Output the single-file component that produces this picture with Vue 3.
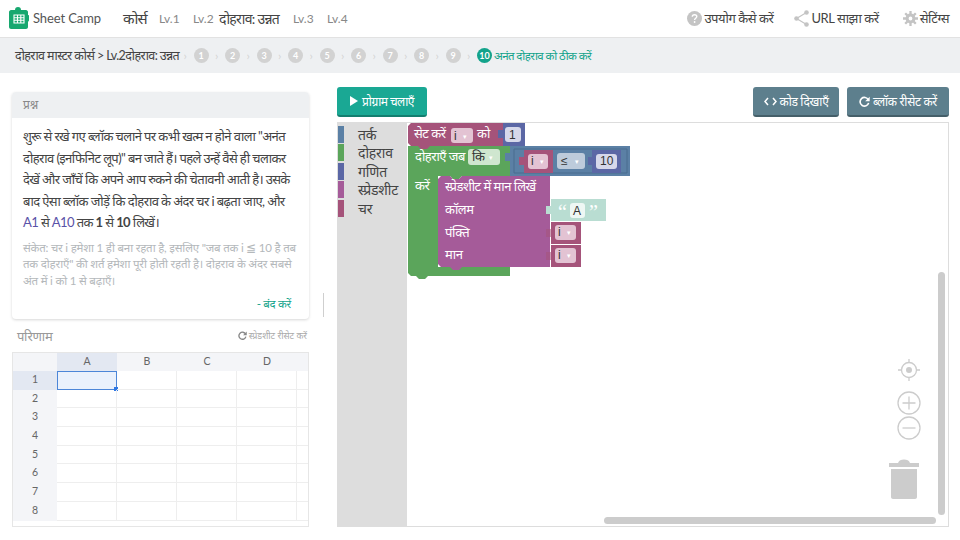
<template>
  <div class="page">
    <header class="topbar">
      <div class="brand">
        <svg class="logo" width="20" height="22" viewBox="0 0 20 22">
          <path d="M2 3h4c0-2 1-3 3-3s3 1 3 3h5c1 0 2 1 2 2v3c1 0 1 .5 1 1.500V13c0 1-.5 1.500-1 1.500V20c0 1-1 2-2 2H2c-1 0-2-1-2-2V5c0-1 1-2 2-2z" fill="#17a86f" />
          <path d="M5 8h10v8H5zM5 10.700h10M5 13.300h10M8.500 8v8M11.800 8v8" fill="none" stroke="#fff" stroke-width="1.100" />
        </svg>
        <span>Sheet Camp</span>
      </div>
      <nav class="levels">
        <span class="course">कोर्स</span>
        <span class="lv first">Lv.1</span>
        <span class="lv second">Lv.2</span>
        <span class="course-sub">दोहराव: उन्नत</span>
        <span class="lv third">Lv.3</span>
        <span class="lv fourth">Lv.4</span>
      </nav>
      <div class="tools">
        <span class="tool help">
          <svg width="15" height="15" viewBox="0 0 15 15">
            <circle cx="7.500" cy="7.500" r="7.500" fill="#c4c4c4" />
            <path d="M5.300 5.800c0-1.300 1-2.100 2.300-2.100s2.200.8 2.200 1.900c0 1.600-2.200 1.700-2.200 3.300" fill="none" stroke="#fff" stroke-width="1.400" />
            <circle cx="7.600" cy="11" r=".9" fill="#fff" />
          </svg>
          उपयोग कैसे करें
        </span>
        <span class="tool share">
          <svg width="15" height="17" viewBox="0 0 15 17">
            <path d="M12.500 2.500 2.500 8.500l10 6" fill="none" stroke="#c4c4c4" stroke-width="1.200" />
            <circle cx="12.500" cy="2.500" r="2.300" fill="#c4c4c4" />
            <circle cx="2.500" cy="8.500" r="2.300" fill="#c4c4c4" />
            <circle cx="12.500" cy="14.500" r="2.300" fill="#c4c4c4" />
          </svg>
          URL साझा करें
        </span>
        <span class="tool gear">
          <svg width="15" height="15" viewBox="0 0 15 15">
            <circle cx="7.500" cy="7.500" r="3.400" fill="none" stroke="#c4c4c4" stroke-width="3" />
            <path d="M7.500 0v15M0 7.500h15M2.200 2.200l10.600 10.600M12.800 2.200 2.200 12.800" stroke="#c4c4c4" stroke-width="2.300" stroke-dasharray="3 9" />
          </svg>
          सेटिंग्स
        </span>
      </div>
    </header>

    <div class="crumbs">
      <span class="crumb-text">दोहराव मास्टर कोर्स &gt; Lv.2दोहराव: उन्नत</span>
      <div class="steps">
        <template v-for="n in 9" :key="n">
          <i class="sep">›</i>
          <span class="step">{{ n }}</span>
        </template>
        <i class="sep">›</i>
        <span class="step active">10</span>
        <span class="step-title">अनंत दोहराव को ठीक करें</span>
      </div>
    </div>

    <main class="body">
      <section class="left">
        <div class="card">
          <div class="card-head">प्रश्न</div>
          <div class="card-body">
            <p class="question">
              शुरू से रखे गए ब्लॉक चलाने पर कभी खत्म न होने वाला "अनंत<br />
              दोहराव (इनफिनिट लूप)" बन जाते हैं। पहले उन्हें वैसे ही चलाकर<br />
              देखें और जाँचें कि अपने आप रुकने की चेतावनी आती है। उसके<br />
              बाद ऐसा ब्लॉक जोड़ें कि दोहराव के अंदर चर i बढ़ता जाए, और<br />
              <b>A1</b> से <b>A10</b> तक <em>1</em> से <em>10</em> लिखें।
            </p>
            <p class="hint">
              संकेत: चर i हमेशा 1 ही बना रहता है, इसलिए "जब तक i ≦ 10 है तब<br />
              तक दोहराएँ" की शर्त हमेशा पूरी होती रहती है। दोहराव के अंदर सबसे<br />
              अंत में i को 1 से बढ़ाएँ।
            </p>
            <div class="close">- बंद करें</div>
          </div>
        </div>

        <div class="result-head">
          <span class="result-title">परिणाम</span>
          <span class="sheet-reset">
            <svg width="9" height="9" viewBox="0 0 16 16">
              <path d="M13.500 5.500A6.300 6.300 0 1 0 14 10" fill="none" stroke="#888" stroke-width="2.400" />
              <path d="M15.500 1v6.500H9z" fill="#888" />
            </svg>
            स्प्रेडशीट रीसेट करें
          </span>
        </div>

        <div class="sheet">
          <div class="sheet-row head-row">
            <div class="corner"></div>
            <div v-for="c in cols" :key="c" class="col-head" :class="{ on: c === 'A' }">{{ c }}</div>
            <div class="rest"></div>
          </div>
          <div v-for="r in 8" :key="r" class="sheet-row">
            <div class="row-head" :class="{ on: r === 1 }">{{ r }}</div>
            <div v-for="c in cols" :key="c" class="cell" :class="{ selected: r === 1 && c === 'A' }"></div>
            <div class="rest cell"></div>
          </div>
        </div>
      </section>

      <div class="splitter"></div>

      <section class="right">
        <div class="actions">
          <button class="btn run">
            <svg width="8" height="10" viewBox="0 0 8 10"><path d="M0 0l8 5-8 5z" fill="#fff" /></svg>
            प्रोग्राम चलाएँ
          </button>
          <div class="actions-right">
            <button class="btn slate code">
              <svg width="13" height="9" viewBox="0 0 13 9"><path d="M4 1 1 4.500 4 8M9 1l3 3.500L9 8" fill="none" stroke="#fff" stroke-width="1.500" /></svg>
              कोड दिखाएँ
            </button>
            <button class="btn slate reset">
              <svg width="11" height="11" viewBox="0 0 16 16">
                <path d="M13.500 5.500A6.300 6.300 0 1 0 14 10" fill="none" stroke="#fff" stroke-width="2.400" />
                <path d="M15.500 1v6.500H9z" fill="#fff" />
              </svg>
              ब्लॉक रीसेट करें
            </button>
          </div>
        </div>

        <div class="workspace">
          <aside class="toolbox">
            <div v-for="t in toolbox" :key="t.name" class="tool-row">
              <span class="swatch" :style="{ background: t.color }"></span>
              <span>{{ t.name }}</span>
            </div>
          </aside>
          <div class="canvas">
            <svg class="blocks" width="541" height="403" viewBox="408 123 541 403">
              <!-- repeat loop, drawn first so the others sit on top -->
              <path d="M408 146h102v30h-48l-3 3h-6l-3-3h-12v91h72v9h-82l-3 3h-6l-3-3h-5l-3-3v-124z" fill="#5ba55b" />
              <path d="M510 146h120v30H510z" fill="#5b80a5" />
              <path d="M514 149h113v24H514z" fill="none" stroke="#4a6d8f" stroke-width="1" />
              <path d="M505 153h6v8h-6z" fill="#5b80a5" />

              <!-- set block -->
              <path d="M411 123h92v23h-73l-3 3h-6l-3-3h-7l-3-3v-17z" fill="#a5537a" />
              <path d="M503 123h22v23h-22z" fill="#5b67a5" />
              <path d="M498 130h5v8h-5z" fill="#5b67a5" />
              <rect x="505" y="127" width="16" height="15" rx="3" fill="#d6d8ea" />
              <rect x="451" y="128" width="22" height="15" rx="3" fill="#e3c3d3" />
              <text class="bt" x="414" y="138">सेट करें</text>
              <text class="ft" x="454" y="140">i</text>
              <text class="arrow" x="463" y="139">▾</text>
              <text class="bt" x="477" y="138">को</text>
              <text class="ft" x="509" y="139">1</text>

              <text class="bt" x="415" y="161">दोहराएँ जब</text>
              <rect x="468" y="149" width="32" height="16" rx="3" fill="#cfe6cf" />
              <text class="ft dev" x="472" y="161">कि</text>
              <text class="arrow" x="489" y="160">▾</text>
              <text class="bt" x="415" y="190">करें</text>

              <!-- compare parts -->
              <path d="M524 150h29v23h-29z" fill="#a5537a" />
              <path d="M519 157h5v8h-5z" fill="#a5537a" />
              <rect x="528" y="154" width="20" height="15" rx="3" fill="#e3c3d3" />
              <text class="ft" x="531" y="165">i</text>
              <text class="arrow" x="540" y="164">▾</text>
              <rect x="557" y="153" width="28" height="16" rx="3" fill="#bdcbdb" />
              <text class="ft" x="561" y="165">≤</text>
              <text class="arrow" x="575" y="164">▾</text>
              <path d="M592 150h29v23h-29z" fill="#5b67a5" />
              <path d="M588 157h4v8h-4z" fill="#5b67a5" />
              <rect x="596" y="154" width="21" height="15" rx="3" fill="#d6d8ea" />
              <text class="ft" x="600" y="165">10</text>

              <!-- spreadsheet write block -->
              <path d="M441 176h9l3 3h6l3-3h88v91h-88l-3 3h-6l-3-3h-9l-3-3v-85z" fill="#a55b99" />
              <text class="bt" x="445" y="191">स्प्रेडशीट में मान लिखें</text>
              <text class="bt" x="445" y="214">कॉलम</text>
              <text class="bt" x="445" y="237">पंक्ति</text>
              <text class="bt" x="445" y="259">मान</text>

              <path d="M551 199h55v22h-55z" fill="#b9ddd2" />
              <path d="M546 206h5v8h-5z" fill="#b9ddd2" />
              <text class="quote" x="558" y="219">“</text>
              <rect x="570" y="203" width="15" height="15" rx="3" fill="#eef7f4" />
              <text class="ft" x="573" y="215">A</text>
              <text class="quote" x="589" y="219">”</text>

              <path d="M551 222h30v22h-30zM551 245h30v22h-30z" fill="#a5537a" />
              <path d="M546 229h5v8h-5zM546 252h5v8h-5z" fill="#a5537a" opacity=".55" />
              <rect x="555" y="225" width="21" height="15" rx="3" fill="#e3c3d3" />
              <rect x="555" y="248" width="21" height="15" rx="3" fill="#e3c3d3" />
              <text class="ft" x="558" y="236">i</text>
              <text class="arrow" x="567" y="235">▾</text>
              <text class="ft" x="558" y="259">i</text>
              <text class="arrow" x="567" y="258">▾</text>
            </svg>

            <div class="controls">
              <svg width="24" height="24" viewBox="0 0 24 24">
                <circle cx="12" cy="12" r="7.500" fill="none" stroke="#ccc" stroke-width="1.300" />
                <circle cx="12" cy="12" r="3" fill="#ccc" />
                <path d="M12 1v4M12 19v4M1 12h4M19 12h4" stroke="#ccc" stroke-width="1.300" />
              </svg>
              <svg class="zoom-in" width="24" height="24" viewBox="0 0 24 24">
                <circle cx="12" cy="12" r="11" fill="#fff" stroke="#ccc" stroke-width="1.300" />
                <path d="M12 5.500v13M5.500 12h13" stroke="#ccc" stroke-width="1.300" />
              </svg>
              <svg class="zoom-out" width="24" height="24" viewBox="0 0 24 24">
                <circle cx="12" cy="12" r="11" fill="#fff" stroke="#ccc" stroke-width="1.300" />
                <path d="M5.500 12h13" stroke="#ccc" stroke-width="1.300" />
              </svg>
              <svg class="trash" width="32" height="41" viewBox="0 0 32 41">
                <path d="M1 5h30v4H1z" fill="#ccc" />
                <path d="M10 5c1-3 3-3.500 6-3.500S21 2 22 5z" fill="#ccc" />
                <path d="M3 11h26v28c0 1-1 2-2 2H5c-1 0-2-1-2-2z" fill="#ccc" />
              </svg>
            </div>
            <div class="scroll-v"></div>
            <div class="scroll-h"></div>
          </div>
        </div>
      </section>
    </main>
  </div>
</template>

<script setup>
const cols = ['A', 'B', 'C', 'D']

const toolbox = [
  { name: 'तर्क', color: '#5b80a5' },
  { name: 'दोहराव', color: '#5ba55b' },
  { name: 'गणित', color: '#5b67a5' },
  { name: 'स्प्रेडशीट', color: '#a55b99' },
  { name: 'चर', color: '#a5537a' }
]
</script>

<style>
html,
body {
  margin: 0;
  background: #fff;
}
</style>

<style scoped>
.page {
  width: 960px;
  height: 540px;
  overflow: hidden;
  display: flex;
  flex-direction: column;
  font-family: 'Lato', 'Noto Sans', sans-serif;
  color: #444;
}

.topbar {
  height: 38px;
  box-sizing: border-box;
  border-bottom: 1px solid #e2e2e2;
  display: flex;
  align-items: center;
  padding: 0 11px 1px 9px;
}
.brand {
  display: flex;
  align-items: center;
  gap: 4px;
  width: 114px;
  font-size: 13px;
  letter-spacing: -0.1px;
  color: #555;
}
.levels {
  display: flex;
  align-items: center;
  font-size: 12px;
  color: #888;
}
.course {
  font-size: 15px;
  letter-spacing: -0.8px;
  color: #444;
  width: 36px;
}
.lv {
  width: 34px;
}
.course-sub {
  font-size: 14px;
  letter-spacing: -0.7px;
  color: #444;
  width: 74px;
  margin-left: -8px;
}
.tools {
  margin-left: auto;
  display: flex;
  align-items: center;
  gap: 24px;
  font-size: 13px;
  letter-spacing: -0.45px;
  color: #444;
}
.tool {
  display: flex;
  align-items: center;
  gap: 2px;
}
.share {
  margin-left: -3px;
}

.crumbs {
  height: 35px;
  background: #eef0f2;
  display: flex;
  align-items: center;
  padding-left: 15px;
  font-size: 12.500px;
  color: #444;
}
.crumb-text {
  width: 162px;
  white-space: nowrap;
  letter-spacing: -0.6px;
}
.steps {
  display: flex;
  align-items: center;
}
.sep {
  width: 16.500px;
  text-align: center;
  font-style: normal;
  color: #d4d4d4;
  font-size: 12px;
}
.step {
  width: 15px;
  height: 15px;
  border-radius: 50%;
  background: #d2d2d2;
  color: #fff;
  font-size: 9px;
  font-weight: 700;
  display: flex;
  align-items: center;
  justify-content: center;
}
.step.active {
  background: #13a38b;
}
.step-title {
  color: #13a38b;
  font-size: 11.500px;
  letter-spacing: -0.6px;
  margin-left: 2px;
}

.body {
  flex: 1;
  display: flex;
  min-height: 0;
}
.left {
  width: 297px;
  margin-left: 12px;
  padding-top: 19px;
  display: flex;
  flex-direction: column;
}
.card {
  height: 227px;
  border-radius: 4px;
  box-shadow: 0 1px 3px rgba(0, 0, 0, 0.16);
  display: flex;
  flex-direction: column;
}
.card-head {
  height: 26px;
  background: #eef0f2;
  border-radius: 4px 4px 0 0;
  font-size: 12px;
  color: #888;
  padding-left: 11px;
  line-height: 25px;
}
.card-body {
  flex: 1;
  padding: 8px 11px 0;
  display: flex;
  flex-direction: column;
}
.card-body p {
  margin: 0;
  white-space: nowrap;
}
.question {
  font-size: 13px;
  letter-spacing: -0.6px;
  line-height: 21.500px;
  color: #444;
}
.question b {
  font-weight: 400;
  color: #5a52a8;
}
.question em {
  font-style: normal;
  font-weight: 700;
}
.hint {
  margin-top: 6px !important;
  font-size: 11.500px;
  letter-spacing: -0.2px;
  line-height: 16.500px;
  color: #b4b8bb;
}
.close {
  margin-top: auto;
  padding-bottom: 8px;
  text-align: right;
  font-size: 11.500px;
  letter-spacing: -0.3px;
  color: #13a38b;
  padding-right: 7px;
}

.result-head {
  height: 33px;
  display: flex;
  align-items: center;
  justify-content: space-between;
  padding: 0 2px 0 5px;
}
.result-title {
  font-size: 13px;
  letter-spacing: -0.3px;
  color: #999;
}
.sheet-reset {
  font-size: 9px;
  color: #aaa;
  display: flex;
  align-items: center;
  gap: 2px;
}

.sheet {
  height: 175px;
  box-sizing: border-box;
  border: 1px solid #e6e6e6;
  overflow: hidden;
  font-size: 10.500px;
  color: #666;
  background: #fff;
}
.sheet-row {
  display: flex;
  height: 18.700px;
}
.sheet-row.head-row {
  height: 18px;
  background: #f4f5f8;
}
.corner,
.row-head {
  width: 44px;
  flex: none;
  background: #f4f5f8;
  text-align: center;
  line-height: 17px;
}
.row-head.on {
  background: #e3e8f2;
}
.col-head {
  width: 60px;
  flex: none;
  text-align: center;
  line-height: 17px;
}
.col-head.on {
  background: #e3e8f2;
}
.rest {
  flex: 1;
}
.cell {
  width: 60px;
  flex: none;
  box-sizing: border-box;
  border-right: 1px solid #eeeeee;
  border-bottom: 1px solid #eeeeee;
  position: relative;
}
.cell.rest {
  flex: 1;
  width: auto;
  border-right: 0;
}
.cell.selected {
  background: #eaf1fc;
  border: 1px solid #4c86d8;
}
.cell.selected::after {
  content: '';
  position: absolute;
  right: -2px;
  bottom: -2px;
  width: 4px;
  height: 4px;
  background: #2f78e4;
}

.splitter {
  width: 1px;
  height: 24px;
  background: #cfcfcf;
  margin: 220px 13px 0 14px;
}

.right {
  width: 612px;
  padding-top: 14px;
  display: flex;
  flex-direction: column;
}
.actions {
  height: 35px;
  display: flex;
  justify-content: space-between;
  align-items: flex-start;
}
.actions-right {
  display: flex;
  gap: 8px;
}
.btn {
  height: 30px;
  box-sizing: border-box;
  border: 0;
  border-bottom: 2px solid rgba(0, 0, 0, 0.25);
  border-radius: 3px;
  color: #fff;
  font-family: 'Roboto', 'Noto Sans', sans-serif;
  font-size: 12px;
  letter-spacing: -0.3px;
  display: flex;
  align-items: center;
  justify-content: center;
  gap: 3px;
  padding: 0;
}
.run {
  width: 90px;
  background: #1aa894;
  letter-spacing: -0.5px;
  gap: 4px;
}
.slate {
  background: #5d7f8d;
}
.code {
  width: 86px;
}
.reset {
  width: 102px;
}

.workspace {
  height: 405px;
  box-sizing: border-box;
  border: 1px solid #ddd;
  display: flex;
  background: #fff;
}
.toolbox {
  width: 69px;
  flex: none;
  background: #dddddd;
  padding-top: 2px;
  box-sizing: border-box;
  font-size: 14px;
  letter-spacing: -0.2px;
  color: #444;
}
.tool-row {
  height: 18.500px;
  display: flex;
  align-items: center;
  gap: 14px;
}
.swatch {
  width: 6px;
  height: 17px;
  flex: none;
}
.canvas {
  flex: 1;
  position: relative;
}
.blocks {
  position: absolute;
  left: 1px;
  top: 0;
}
.bt {
  font-size: 13px;
  letter-spacing: -0.5px;
  fill: #fff;
}
.ft {
  font-family: 'Liberation Sans', sans-serif;
  font-size: 12px;
  fill: #333;
}
.ft.dev {
  font-size: 13px;
}
.arrow {
  font-size: 7px;
  fill: #fff;
}
.quote {
  font-family: 'Liberation Serif', serif;
  font-size: 20px;
  fill: #fff;
}

.controls {
  position: absolute;
  left: 486px;
  top: 235px;
  display: flex;
  flex-direction: column;
  align-items: center;
  width: 32px;
}
.zoom-in {
  margin-top: 9px;
}
.zoom-out {
  margin-top: 1px;
}
.trash {
  margin-top: 18px;
  margin-left: -10px;
}
.scroll-v {
  position: absolute;
  left: 531px;
  top: 149px;
  width: 7px;
  height: 243px;
  background: #ccc;
  border-radius: 4px;
}
.scroll-h {
  position: absolute;
  left: 197px;
  top: 394px;
  width: 332px;
  height: 7px;
  background: #ccc;
  border-radius: 4px;
}
</style>
